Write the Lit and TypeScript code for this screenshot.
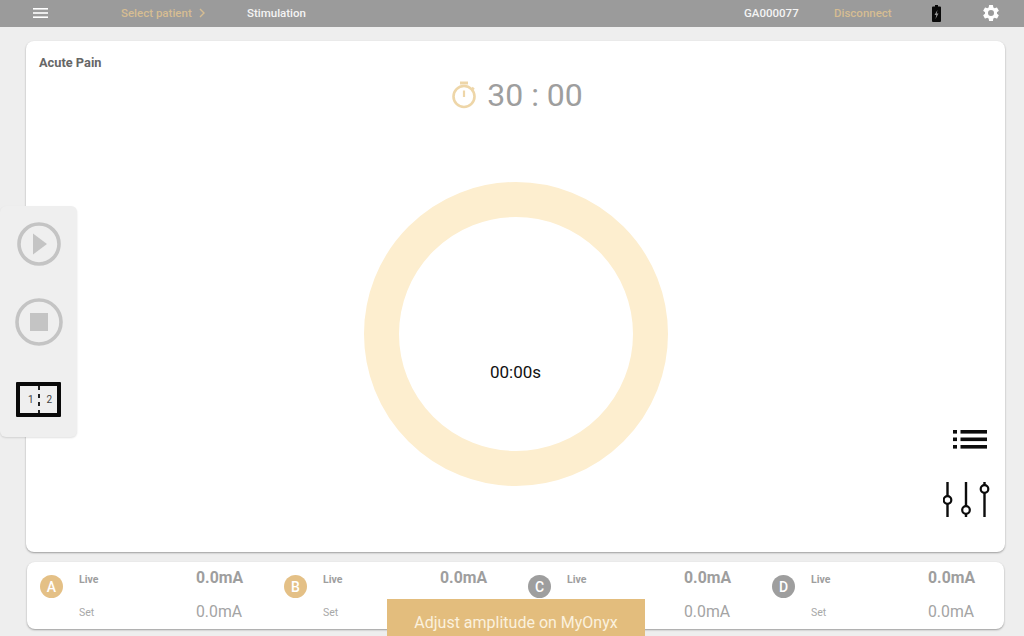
import { LitElement, html, css, svg } from 'lit';
import { customElement } from 'lit/decorators.js';

const CHANNELS = [
  { id: 'A', active: true },
  { id: 'B', active: true },
  { id: 'C', active: false },
  { id: 'D', active: false },
];

const GEAR =
  'M19.14 12.94c.04-.3.06-.61.06-.94 0-.32-.02-.64-.07-.94l2.03-1.58a.49.49 0 0 0 .12-.61l-1.92-3.32a.49.49 0 0 0-.59-.22l-2.39.96c-.5-.38-1.03-.7-1.62-.94l-.36-2.54a.48.48 0 0 0-.48-.41h-3.84a.47.47 0 0 0-.47.41l-.36 2.54c-.59.24-1.13.57-1.62.94l-2.39-.96a.48.48 0 0 0-.59.22L2.74 8.87a.47.47 0 0 0 .12.61l2.03 1.58c-.05.3-.09.63-.09.94s.02.64.07.94l-2.03 1.58a.49.49 0 0 0-.12.61l1.92 3.32c.12.22.37.29.59.22l2.39-.96c.5.38 1.03.7 1.62.94l.36 2.54c.05.24.24.41.48.41h3.84c.24 0 .44-.17.47-.41l.36-2.54c.59-.24 1.13-.56 1.62-.94l2.39.96c.22.08.47 0 .59-.22l1.92-3.32a.47.47 0 0 0-.12-.61l-2.01-1.58zM12 15.6A3.6 3.6 0 1 1 12 8.4a3.6 3.6 0 0 1 0 7.2z';

@customElement('app-root')
export class AppRoot extends LitElement {
  static styles = css`
    :host {
      display: block;
      position: relative;
      width: 1024px;
      height: 636px;
      overflow: hidden;
      background: #eeeeee;
      font-family: Roboto, 'Liberation Sans', sans-serif;
    }
    .topbar {
      box-sizing: border-box;
      display: flex;
      align-items: center;
      height: 27px;
      padding-bottom: 1px;
      background: #9b9b9b;
      font-size: 11.5px;
      font-weight: 500;
      color: #f4f4f4;
    }
    .menu {
      display: flex;
      margin-left: 33px;
      margin-right: 73px;
    }
    .gold {
      color: #d6bd92;
    }
    .crumb {
      display: flex;
      align-items: center;
      gap: 7px;
      width: 126px;
    }
    .spacer {
      flex: 1;
    }
    .device {
      width: 90px;
    }
    .disconnect {
      width: 98px;
    }
    .battery {
      display: flex;
      margin-right: 40px;
    }
    .gear {
      display: flex;
      margin-right: 23px;
    }
    .card {
      background: #fff;
      border-radius: 8px;
      box-shadow: 0 1px 2px rgba(0, 0, 0, 0.35);
    }
    .main {
      display: grid;
      grid-template-columns: 1fr auto 1fr;
      grid-template-rows: auto 1fr;
      width: 979px;
      height: 511px;
      margin: 14px 0 0 26px;
    }
    .title {
      grid-column: 1 / -1;
      height: 15px;
      padding: 15px 0 0 13px;
      font-size: 12.8px;
      font-weight: 700;
      line-height: 14px;
      color: #666;
    }
    .center {
      grid-column: 2;
      display: flex;
      flex-direction: column;
      align-items: center;
    }
    .timer {
      display: flex;
      align-items: center;
      gap: 10px;
      height: 32px;
      margin: 8px 0 71px 3px;
      font-size: 32px;
      color: #9e9e9e;
    }
    .ring {
      box-sizing: border-box;
      display: flex;
      align-items: center;
      justify-content: center;
      width: 304px;
      height: 304px;
      padding-top: 76px;
      border: 35px solid #fdeecf;
      border-radius: 50%;
      font-size: 17px;
      color: #111;
    }
    .tools {
      grid-column: 3;
      display: flex;
      flex-direction: column;
      align-items: flex-end;
      gap: 33px;
      padding: 359px 14px 0 0;
    }
    .tools svg {
      display: block;
    }
    .tools .list {
      margin-right: 4px;
    }
    .side {
      position: absolute;
      left: 0;
      top: 206px;
      box-sizing: border-box;
      display: flex;
      flex-direction: column;
      align-items: center;
      width: 77px;
      height: 231px;
      padding: 15px 0 0;
      background: #efefef;
      border-radius: 6px;
      box-shadow: 0 1px 2px rgba(0, 0, 0, 0.12);
    }
    .side svg {
      display: block;
    }
    .play {
      margin-bottom: 31px;
    }
    .stop {
      margin-bottom: 36px;
    }
    .matrix {
      position: relative;
      box-sizing: border-box;
      display: flex;
      justify-content: space-between;
      align-items: center;
      width: 45px;
      height: 35px;
      padding: 0 5px 0 8px;
      border: 4px solid #0a0a0a;
      border-radius: 1px;
      font-size: 10px;
      color: #444;
    }
    .matrix i {
      position: absolute;
      left: 17.500px;
      top: 0;
      width: 2px;
      height: 27px;
      background: repeating-linear-gradient(#222 0 4px, transparent 4px 8px);
    }
    .channels {
      display: grid;
      grid-template-columns: repeat(4, 203px);
      column-gap: 41px;
      box-sizing: border-box;
      width: 977px;
      height: 67px;
      margin: 10px 0 0 27px;
      padding: 0 0 0 13px;
    }
    .channel {
      display: grid;
      grid-template-columns: 39px 1fr auto;
      grid-template-rows: 34px 33px;
      align-items: center;
    }
    .dot {
      grid-row: 1 / 3;
      display: flex;
      align-items: center;
      justify-content: center;
      width: 23px;
      height: 23px;
      margin-top: -18px;
      border-radius: 50%;
      background: #9e9e9e;
      font-size: 14px;
      font-weight: 500;
      color: #fff;
    }
    .dot.on {
      background: #e4c086;
    }
    .label {
      font-size: 10.5px;
      color: #a8a8a8;
    }
    .label.live {
      font-weight: 700;
      color: #9e9e9e;
      margin-top: 1px;
    }
    .value {
      font-size: 15.8px;
      color: #a4a4a4;
      margin-top: -2px;
    }
    .value.live {
      font-weight: 700;
      color: #9e9e9e;
      margin-top: -3px;
    }
    .toast {
      position: absolute;
      left: 387px;
      top: 599px;
      display: flex;
      align-items: center;
      justify-content: center;
      width: 258px;
      height: 37px;
      padding-top: 9px;
      box-sizing: border-box;
      background: #e3bd7d;
      font-size: 16px;
      color: #fbf1de;
    }
  `;

  renderTimerIcon() {
    return html`<svg width="26" height="28" viewBox="0 0 26 28" fill="none" stroke="#eed6a8">
      <path d="M9 2h8" stroke-width="3" />
      <circle cx="13" cy="15.5" r="10.5" stroke-width="2.6" />
      <path d="M13 9.5v6.5" stroke-width="2.2" />
      <path d="M21 6.5l2 2" stroke-width="2.2" />
    </svg>`;
  }

  renderTools() {
    return html`<div class="tools">
      <svg class="list" width="34" height="19" viewBox="0 0 34 19" fill="#0c0c0c">
        ${[0, 7.5, 15].map(
          (y) => svg`<rect x="0" y=${y} width="4" height="3.6" /><rect x="7.5" y=${y} width="26.5" height="3.6" />`
        )}
      </svg>
      <svg width="48" height="36" viewBox="0 0 48 36" fill="#fff" stroke="#0c0c0c">
        <path d="M4.500 0v35M23 0v35M41.500 0v35" stroke-width="2.4" />
        <circle cx="4.500" cy="18" r="3.8" stroke-width="2.2" />
        <circle cx="23" cy="28" r="3.8" stroke-width="2.2" />
        <circle cx="41.500" cy="7" r="3.8" stroke-width="2.2" />
      </svg>
    </div>`;
  }

  renderChannel(c: { id: string; active: boolean }) {
    return html`<div class="channel">
      <div class="dot ${c.active ? 'on' : ''}">${c.id}</div>
      <div class="label live">Live</div>
      <div class="value live">0.0mA</div>
      <div class="label">Set</div>
      <div class="value">0.0mA</div>
    </div>`;
  }

  render() {
    return html`
      <div class="topbar">
        <span class="menu">
          <svg width="15" height="12" viewBox="0 0 15 12" fill="#fff">
            <rect y="1" width="15" height="1.6" /><rect y="5.2" width="15" height="1.6" /><rect y="9.4" width="15" height="1.6" />
          </svg>
        </span>
        <span class="crumb gold">
          Select patient
          <svg width="7" height="10" viewBox="0 0 7 10" fill="none" stroke="#d6bd92" stroke-width="1.4">
            <path d="M1 1l4 4-4 4" />
          </svg>
        </span>
        <span>Stimulation</span>
        <span class="spacer"></span>
        <span class="device">GA000077</span>
        <span class="disconnect gold">Disconnect</span>
        <span class="battery">
          <svg width="9" height="17" viewBox="0 0 9 17">
            <path d="M3 0h3v1.500h2a1 1 0 0 1 1 1V16a1 1 0 0 1-1 1H1a1 1 0 0 1-1-1V2.500a1 1 0 0 1 1-1h2z" fill="#0a0a0a" />
            <path d="M5.500 5L2.500 10h1.800L3.500 14 6.500 8.500H4.700z" fill="#9a9a9a" />
          </svg>
        </span>
        <span class="gear">
          <svg width="20" height="20" viewBox="0 0 24 24" fill="#fff"><path d=${GEAR} /></svg>
        </span>
      </div>

      <div class="card main">
        <div class="title">Acute Pain</div>
        <div class="center">
          <div class="timer">${this.renderTimerIcon()}<span>30 : 00</span></div>
          <div class="ring">00:00s</div>
        </div>
        ${this.renderTools()}
      </div>

      <div class="card channels">${CHANNELS.map((c) => this.renderChannel(c))}</div>

      <div class="side">
        <svg class="play" width="46" height="46" viewBox="0 0 46 46" fill="none">
          <circle cx="23" cy="23" r="20" stroke="#c4c4c4" stroke-width="3.6" />
          <path d="M17 12.500L31 23 17 33.500z" fill="#c4c4c4" />
        </svg>
        <svg class="stop" width="48" height="48" viewBox="0 0 48 48" fill="none">
          <circle cx="24" cy="24" r="22" stroke="#c4c4c4" stroke-width="3.600" />
          <rect x="15" y="15" width="18" height="18" fill="#c4c4c4" />
        </svg>
        <div class="matrix"><span>1</span><i></i><span>2</span></div>
      </div>

      <div class="toast">Adjust amplitude on MyOnyx</div>
    `;
  }
}
